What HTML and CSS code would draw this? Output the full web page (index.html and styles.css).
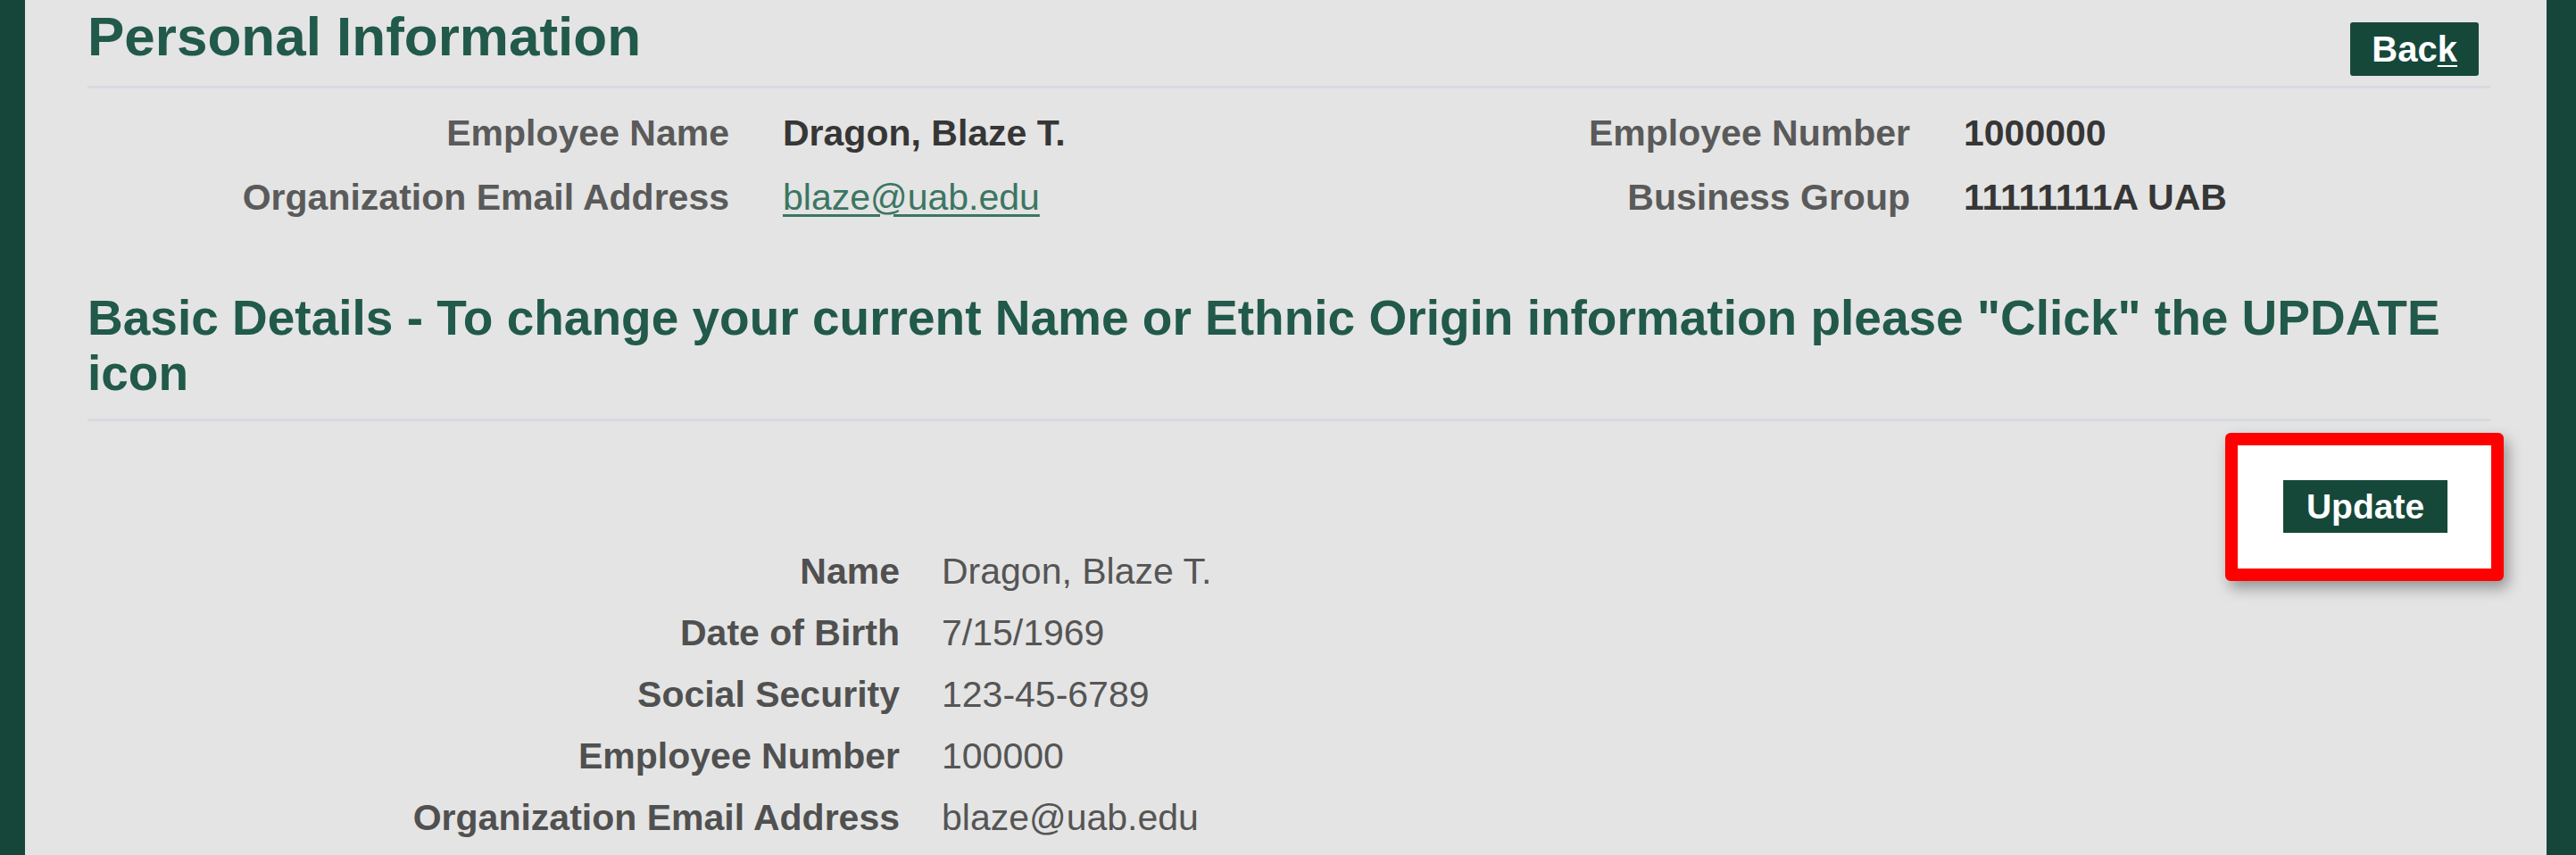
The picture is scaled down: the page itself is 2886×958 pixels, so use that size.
FILE: index.html
```html
<!DOCTYPE html>
<html lang="en">
<head>
<meta charset="utf-8">
<title>Personal Information</title>
<link rel="stylesheet" href="styles.css">
</head>
<body>
<div class="frame">
  <div class="bar bar-left"></div>
  <main class="content">
    <header class="section-head">
      <h1 class="title">Personal Information</h1>
      <button class="btn btn-back" type="button">Bac<u>k</u></button>
    </header>

    <div class="summary">
      <div class="label">Employee Name</div>
      <div class="value strong">Dragon, Blaze T.</div>
      <div class="label">Employee Number</div>
      <div class="value strong">1000000</div>

      <div class="label">Organization Email Address</div>
      <div class="value"><a class="link" href="#">blaze@uab.edu</a></div>
      <div class="label">Business Group</div>
      <div class="value strong">11111111A UAB</div>
    </div>

    <h2 class="subtitle">Basic Details - To change your current Name or Ethnic Origin information please "Click" the UPDATE icon</h2>

    <div class="actions">
      <div class="update-wrap">
        <span class="highlight"></span>
        <button class="btn btn-update" type="button">Update</button>
      </div>
    </div>

    <div class="details">
      <div class="label">Name</div>
      <div class="value">Dragon, Blaze T.</div>
      <div class="label">Date of Birth</div>
      <div class="value">7/15/1969</div>
      <div class="label">Social Security</div>
      <div class="value">123-45-6789</div>
      <div class="label">Employee Number</div>
      <div class="value">100000</div>
      <div class="label">Organization Email Address</div>
      <div class="value">blaze@uab.edu</div>
    </div>
  </main>
  <div class="bar bar-right"></div>
</div>
</body>
</html>
```

FILE: styles.css
```css
html, body {
  margin: 0;
  padding: 0;
  height: 100%;
}

body {
  background: #e4e4e4;
  font-family: "Liberation Sans", Arial, sans-serif;
  overflow: hidden;
}

.frame {
  display: flex;
  min-height: 100vh;
}

.bar {
  background: #16453a;
  flex: 0 0 auto;
}

.bar-left {
  width: 28px;
}

.bar-right {
  width: 33px;
}

.content {
  flex: 1 1 auto;
  padding: 0 63px 0 70px;
  min-width: 0;
}

.section-head {
  display: flex;
  justify-content: space-between;
  align-items: flex-start;
  height: 96px;
  border-bottom: 3px solid #d7dadf;
}

.title {
  margin: 0;
  padding-top: 6px;
  font-size: 62px;
  line-height: 70px;
  font-weight: bold;
  color: #21594a;
}

.btn {
  border: none;
  background: #16483a;
  color: #ffffff;
  font-family: "Liberation Sans", Arial, sans-serif;
  font-weight: bold;
  cursor: pointer;
}

.btn-back {
  margin: 25px 13px 0 0;
  height: 60px;
  padding: 0 24px;
  font-size: 40px;
  line-height: 60px;
  border-radius: 3px;
}

.btn-back u {
  text-decoration-thickness: 2px;
  text-underline-offset: 4px;
}

.summary {
  display: grid;
  grid-template-columns: 719px 500px 703px 1fr;
  column-gap: 60px;
  margin-top: 14px;
  font-size: 41px;
  line-height: 72px;
}

.label {
  text-align: right;
  font-weight: bold;
  color: #5a5a5a;
  white-space: nowrap;
}

.value {
  color: #555555;
  white-space: nowrap;
}

.value.strong {
  font-weight: bold;
  color: #363636;
}

.link {
  color: #3b7663;
  text-decoration: underline;
  text-decoration-thickness: 3px;
  text-underline-offset: 5px;
}

.subtitle {
  margin: 68px 0 0 0;
  padding-bottom: 20px;
  border-bottom: 3px solid #d7dadf;
  font-size: 55px;
  line-height: 62px;
  font-weight: bold;
  color: #21594a;
}

.actions {
  display: flex;
  justify-content: flex-end;
  padding: 66px 48px 0 0;
}

.update-wrap {
  position: relative;
  display: flex;
}

.highlight {
  position: absolute;
  top: -53px;
  right: -63px;
  bottom: -54px;
  left: -65px;
  border: 14px solid #ff0000;
  border-radius: 6px;
  background: #ffffff;
  box-shadow: 5px 8px 16px rgba(0, 0, 0, 0.35);
}

.btn-update {
  position: relative;
  height: 59px;
  width: 184px;
  padding: 0;
  font-size: 39px;
  line-height: 59px;
}

.details {
  display: grid;
  grid-template-columns: 910px 1fr;
  column-gap: 47px;
  margin-top: 9px;
  font-size: 41px;
  line-height: 69px;
}

.details .label {
  color: #505050;
}
```
